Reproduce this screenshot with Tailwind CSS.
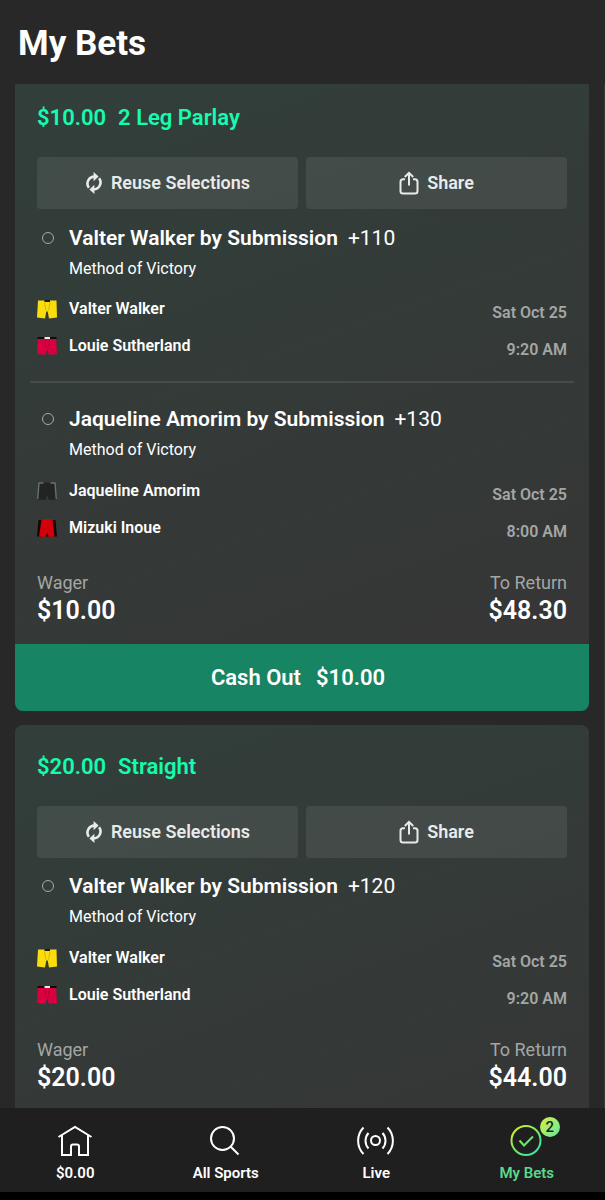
<!DOCTYPE html>
<html lang="en">
<head>
<meta charset="utf-8">
<meta name="viewport" content="width=device-width, initial-scale=1">
<title>My Bets</title>
<script src="https://cdn.jsdelivr.net/npm/@tailwindcss/browser@4"></script>
</head>
<body class="flex h-screen flex-col overflow-hidden bg-[#282828] font-['Roboto',sans-serif] text-white">
<svg class="hidden" aria-hidden="true">
  <symbol id="reuse" viewBox="0 0 18 22">
    <path d="M3.900 15.800A7 7 0 0 1 9.500 4.600M14.100 6.200A7 7 0 0 1 8.500 17.400" fill="none" stroke="currentColor" stroke-width="2.600"/>
    <path d="M8.600 0l5 4.600-5 4.600zM9.400 22l-5-4.600 5-4.600z" fill="currentColor"/>
  </symbol>
  <symbol id="share" viewBox="0 0 20 24">
    <path d="M6 8.200H4a2.500 2.500 0 0 0-2.500 2.500V20A2.500 2.500 0 0 0 4 22.500h12a2.500 2.500 0 0 0 2.500-2.500v-9.300A2.500 2.500 0 0 0 16 8.200h-2M10 14.500V2M5.800 6 10 1.800 14.200 6" fill="none" stroke="currentColor" stroke-width="2"/>
  </symbol>
  <symbol id="shorts-yellow" viewBox="0 0 20 20">
    <path d="M1 1.500h18.500l.5 17-8 1-1.300-7H9.300l-1.300 7-8-1z" fill="#fbdc0c"/>
    <path d="M7.500 1H13v2H7.500z" fill="#1c1c14"/>
    <path d="M7.500 3.500l1.500 8M13 3.500l-1.500 8" stroke="#d6b600" fill="none"/>
  </symbol>
  <symbol id="shorts-pink" viewBox="0 0 20 20">
    <path d="M1 2h18l1 16-8 1-1.700-6L8.500 19 0 18z" fill="#d8003f"/>
    <path d="M.5 1h19v2H.5z" fill="#15070b"/><path d="M7.500 1H13v2H7.500z" fill="#f4e6ea"/>
    <path d="M8 4l1.200 8M12.500 4l-1.200 8" stroke="#b80036" fill="none"/>
  </symbol>
  <symbol id="shorts-black" viewBox="0 0 20 20">
    <path d="M2 1.500h16l1.500 17-7.500.500-1.700-5L8.500 19 .5 18.500z" fill="#222323"/>
    <path d="M6.500 2H2L.7 18M13.500 2H18l1.300 16" stroke="#6d706f" stroke-width="1.400" fill="none"/>
  </symbol>
  <symbol id="shorts-red" viewBox="0 0 20 20">
    <path d="M1.500 2h17L20 18.500H0z" fill="#170506"/>
    <path d="M4.500 1.800 8 1h4l3.500.800L17.500 18.500l-5.500.700-1.700-5-1.800 5-6.500-.7z" fill="#d1000b"/>
  </symbol>
</svg>

<header class="shrink-0 px-[18px] pt-5 pb-4">
  <h1 class="text-[35px] leading-[48px] font-bold">My Bets</h1>
</header>

<main class="min-h-0 flex-1 overflow-hidden border-r border-[#3a3a3a] pr-[15px] pl-[15px]">
  <article class="-mt-2 overflow-hidden rounded-lg bg-linear-160 from-[#313f3a] to-[#363535]">
    <div class="px-[22px]">
      <h2 class="flex h-[81px] items-center gap-3 pt-[2px] text-[22px] font-semibold text-[#14fcae]"><span>$10.00</span><span>2 Leg Parlay</span></h2>
      <div class="grid grid-cols-2 gap-2 text-lg font-semibold text-[#e8ebea]">
        <button class="flex h-[52px] items-center justify-center gap-2 rounded-sm bg-white/8"><svg class="h-[22px] w-[18px]"><use href="#reuse"/></svg>Reuse Selections</button>
        <button class="flex h-[52px] items-center justify-center gap-2 rounded-sm bg-white/8"><svg class="h-6 w-5"><use href="#share"/></svg>Share</button>
      </div>
      <section class="pt-[15px] pb-[13px]">
        <div class="flex items-center">
          <span class="ml-[5px] size-3 rounded-full border border-[#a5aaa8]"></span>
          <h3 class="ml-[15px] text-[21px] leading-7 font-semibold">Valter Walker by Submission</h3>
          <span class="ml-[10px] text-[21px] leading-7">+110</span>
        </div>
        <p class="mt-[5px] pl-8 text-base leading-6">Method of Victory</p>
        <div class="mt-[9px] flex justify-between">
          <ul class="text-base font-semibold">
            <li class="flex h-[37px] items-center gap-3"><svg class="size-5"><use href="#shorts-yellow"/></svg>Valter Walker</li>
            <li class="flex h-[37px] items-center gap-3"><svg class="size-5"><use href="#shorts-pink"/></svg>Louie Sutherland</li>
          </ul>
          <div class="pt-1 text-right text-base leading-[37px] font-semibold text-[#a4a6a5]"><p>Sat Oct 25</p><p>9:20 AM</p></div>
        </div>
      </section>
      <hr class="-mx-[7px] border-t-2 border-[#474c4a]">
      <section class="pt-[22px]">
        <div class="flex items-center">
          <span class="ml-[5px] size-3 rounded-full border border-[#a5aaa8]"></span>
          <h3 class="ml-[15px] text-[21px] leading-7 font-semibold">Jaqueline Amorim by Submission</h3>
          <span class="ml-[10px] text-[21px] leading-7">+130</span>
        </div>
        <p class="mt-[5px] pl-8 text-base leading-6">Method of Victory</p>
        <div class="mt-[10px] flex justify-between">
          <ul class="text-base font-semibold">
            <li class="flex h-[37px] items-center gap-3"><svg class="size-5"><use href="#shorts-black"/></svg>Jaqueline Amorim</li>
            <li class="flex h-[37px] items-center gap-3"><svg class="size-5"><use href="#shorts-red"/></svg>Mizuki Inoue</li>
          </ul>
          <div class="pt-1 text-right text-base leading-[37px] font-semibold text-[#a4a6a5]"><p>Sat Oct 25</p><p>8:00 AM</p></div>
        </div>
      </section>
      <dl class="flex justify-between pt-[21px] pb-[17px]">
        <div><dt class="text-lg leading-6 text-[#a4a6a5]">Wager</dt><dd class="text-[25px] leading-8 font-semibold">$10.00</dd></div>
        <div class="text-right"><dt class="text-lg leading-6 text-[#a4a6a5]">To Return</dt><dd class="text-[25px] leading-8 font-semibold">$48.30</dd></div>
      </dl>
    </div>
    <button class="flex h-[67px] w-full items-center justify-center gap-[15px] bg-[#178463] pr-2 text-[22px] font-semibold"><span>Cash Out</span><span>$10.00</span></button>
  </article>

  <article class="mt-[14px] rounded-lg bg-linear-160 from-[#313f3a] to-[#363535] px-[22px] pb-20">
    <h2 class="flex h-[81px] items-center gap-3 pt-[2px] text-[22px] font-semibold text-[#14fcae]"><span>$20.00</span><span>Straight</span></h2>
    <div class="grid grid-cols-2 gap-2 text-lg font-semibold text-[#e8ebea]">
      <button class="flex h-[52px] items-center justify-center gap-2 rounded-sm bg-white/8"><svg class="h-[22px] w-[18px]"><use href="#reuse"/></svg>Reuse Selections</button>
      <button class="flex h-[52px] items-center justify-center gap-2 rounded-sm bg-white/8"><svg class="h-6 w-5"><use href="#share"/></svg>Share</button>
    </div>
    <section class="pt-[14px]">
      <div class="flex items-center">
        <span class="ml-[5px] size-3 rounded-full border border-[#a5aaa8]"></span>
        <h3 class="ml-[15px] text-[21px] leading-7 font-semibold">Valter Walker by Submission</h3>
        <span class="ml-[10px] text-[21px] leading-7">+120</span>
      </div>
      <p class="mt-[5px] pl-8 text-base leading-6">Method of Victory</p>
      <div class="mt-[10px] flex justify-between">
        <ul class="text-base font-semibold">
          <li class="flex h-[37px] items-center gap-3"><svg class="size-5"><use href="#shorts-yellow"/></svg>Valter Walker</li>
          <li class="flex h-[37px] items-center gap-3"><svg class="size-5"><use href="#shorts-pink"/></svg>Louie Sutherland</li>
        </ul>
        <div class="pt-1 text-right text-base leading-[37px] font-semibold text-[#a4a6a5]"><p>Sat Oct 25</p><p>9:20 AM</p></div>
      </div>
    </section>
    <dl class="flex justify-between pt-[21px] pb-[17px]">
      <div><dt class="text-lg leading-6 text-[#a4a6a5]">Wager</dt><dd class="text-[25px] leading-8 font-semibold">$20.00</dd></div>
      <div class="text-right"><dt class="text-lg leading-6 text-[#a4a6a5]">To Return</dt><dd class="text-[25px] leading-8 font-semibold">$44.00</dd></div>
    </dl>
  </article>
</main>

<nav class="grid shrink-0 grid-cols-4 border-b-8 border-black bg-[#1f1f1f] pt-3 pr-[3px] pb-[6px] text-[15px] leading-[26px] font-semibold">
  <a href="#" class="flex flex-col items-center">
    <svg class="h-10 w-10" viewBox="0 0 40 40" fill="none" stroke="currentColor" stroke-width="2"><path d="M3.500 17 20 7l16.500 10M7 15.500V35h9V26.500a2 2 0 0 1 2-2h4a2 2 0 0 1 2 2V35h9V15.500"/></svg>
    $0.00
  </a>
  <a href="#" class="flex flex-col items-center">
    <svg class="h-10 w-10" viewBox="0 0 40 40" fill="none" stroke="currentColor" stroke-width="2"><circle cx="16.500" cy="18.500" r="11.500"/><path d="m24.500 26.500 8 8"/></svg>
    All Sports
  </a>
  <a href="#" class="flex flex-col items-center">
    <svg class="h-10 w-10" viewBox="0 0 40 40" fill="none" stroke="currentColor" stroke-width="2"><circle cx="19.500" cy="20.500" r="4.500"/><path d="M12.500 13a11.500 11.500 0 0 0 0 15.500M26.500 13a11.500 11.500 0 0 1 0 15.500M7.500 7.500a19 19 0 0 0 0 26.500M31.500 7.500a19 19 0 0 1 0 26.500"/></svg>
    Live
  </a>
  <a href="#" class="flex flex-col items-center text-[#5ad98c]">
    <span class="relative">
      <svg class="h-10 w-10" viewBox="0 0 40 40" fill="none" stroke="url(#ring)" stroke-width="2"><defs><linearGradient id="ring" gradientUnits="userSpaceOnUse" x1="8" y1="8" x2="30" y2="34"><stop stop-color="#d4f02c"/><stop offset=".5" stop-color="#6fe86b"/><stop offset="1" stop-color="#30e8a8"/></linearGradient></defs><circle cx="19" cy="20.500" r="14.500"/><path d="m12.500 20.500 4.500 5 9-9"/></svg>
      <span class="absolute -top-[3px] left-[33px] flex size-5 items-center justify-center rounded-full bg-linear-to-br from-[#d4f02c] to-[#4fe89a] text-[15px] font-medium text-[#1f1f1f]">2</span>
    </span>
    My Bets
  </a>
</nav>
</body>
</html>
